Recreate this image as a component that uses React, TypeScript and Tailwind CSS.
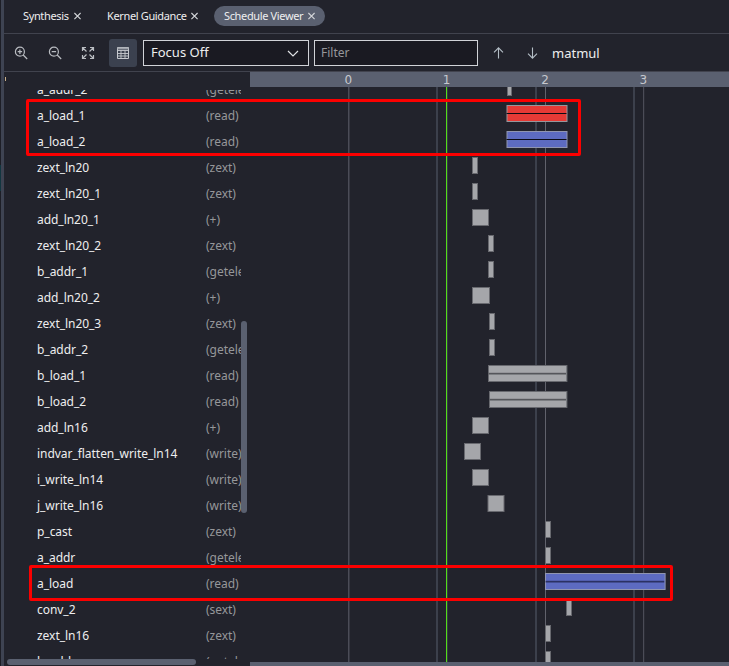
import React from "react";

type Tone = "gray" | "red" | "blue";
type Op = { name: string; kind: string; x: number; w: number; tone?: Tone; split?: "thin" | "thick" };

// x and w are measured from the left edge of the chart pane.
const ops: Op[] = [
  { name: "a_addr_2", kind: "(getele", x: 257, w: 5 },
  { name: "a_load_1", kind: "(read)", x: 256.5, w: 61, tone: "red", split: "thin" },
  { name: "a_load_2", kind: "(read)", x: 256.5, w: 61, tone: "blue", split: "thin" },
  { name: "zext_ln20", kind: "(zext)", x: 222, w: 6 },
  { name: "zext_ln20_1", kind: "(zext)", x: 222, w: 6 },
  { name: "add_ln20_1", kind: "(+)", x: 222, w: 17 },
  { name: "zext_ln20_2", kind: "(zext)", x: 238, w: 6 },
  { name: "b_addr_1", kind: "(getele", x: 238, w: 6 },
  { name: "add_ln20_2", kind: "(+)", x: 222, w: 18 },
  { name: "zext_ln20_3", kind: "(zext)", x: 239, w: 6 },
  { name: "b_addr_2", kind: "(getele", x: 239, w: 6 },
  { name: "b_load_1", kind: "(read)", x: 238, w: 79.4, split: "thick" },
  { name: "b_load_2", kind: "(read)", x: 239, w: 78.4, split: "thick" },
  { name: "add_ln16", kind: "(+)", x: 222, w: 17 },
  { name: "indvar_flatten_write_ln14", kind: "(write)", x: 214, w: 17 },
  { name: "i_write_ln14", kind: "(write)", x: 222, w: 17 },
  { name: "j_write_ln16", kind: "(write)", x: 237.5, w: 17 },
  { name: "p_cast", kind: "(zext)", x: 295, w: 6 },
  { name: "a_addr", kind: "(getele", x: 295, w: 6 },
  { name: "a_load", kind: "(read)", x: 295, w: 120.6, tone: "blue", split: "thick" },
  { name: "conv_2", kind: "(sext)", x: 316, w: 6 },
  { name: "zext_ln16", kind: "(zext)", x: 295, w: 6 },
  { name: "b_addr", kind: "(getele", x: 295, w: 6 },
];

const tones: Record<Tone, { fill: string; edge: string; thick: string }> = {
  gray: { fill: "#a5a6aa", edge: "#68696f", thick: "#55565b" },
  red: { fill: "#e63a36", edge: "#96979d", thick: "#55565b" },
  blue: { fill: "#5d6bc1", edge: "#9095b0", thick: "#2b3163" },
};

function Bar({ op }: { op: Op }) {
  const t = tones[op.tone ?? "gray"];
  return (
    <svg className="block" width="479" height="17">
      <rect x={op.x + 0.5} y="0.5" width={op.w - 1} height="16" fill={t.fill} stroke={t.edge} />
      {op.split === "thin" && <rect x={op.x} y="8" width={op.w - 1} height="1" fill="#0b0b14" />}
      {op.split === "thick" && <rect x={op.x + 0.6} y="7.8" width={op.w - 2} height="1.7" fill={t.thick} />}
    </svg>
  );
}

function Close() {
  return (
    <svg width="7" height="8" viewBox="0 0 7 8" stroke="#d4d6da" strokeWidth="1.1" fill="none">
      <path d="M.4 1l6.2 6.2M6.6 1L.4 7.2" />
    </svg>
  );
}

function Zoom({ plus }: { plus?: boolean }) {
  return (
    <svg width="14" height="14" viewBox="0 0 14 14" stroke="#b9bcc1" strokeWidth="1.2" fill="none">
      <circle cx="5.9" cy="5.7" r="4.5" />
      <path d="M9.2 9l4 4M3.7 5.7h4.4" />
      {plus && <path d="M5.9 3.5v4.4" />}
    </svg>
  );
}

function Expand() {
  return (
    <svg width="14" height="14" viewBox="0 0 14 14" stroke="#b9bcc1" strokeWidth="1.2" fill="none">
      <path d="M1.5 5V1.5H5M9 1.5h3.5V5M12.5 9v3.5H9M5 12.5H1.5V9M1.5 1.5l4 4M12.5 1.5l-4 4M12.5 12.5l-4-4M1.5 12.5l4-4" />
    </svg>
  );
}

function Table() {
  return (
    <svg width="12" height="12" viewBox="0 0 12 12" stroke="#c6c9ce" strokeWidth="1" fill="none">
      <path d="M.5.5h11v11H.5z" />
      <path d="M.5 1.5h11" strokeWidth="2" stroke="#9da1a9" />
      <path d="M.5 3.5h11M.5 6.5h11M.5 9h11M4 3.5v8M8 3.5v8" strokeWidth=".9" />
    </svg>
  );
}

function Arrow({ down }: { down?: boolean }) {
  return (
    <svg width="11" height="12" viewBox="0 0 11 12" stroke="#b4bec6" strokeWidth="1.1" fill="none">
      <path d={down ? "M5.5 .5v10.6M1 6.6l4.5 4.5L10 6.6" : "M5.5 11.5V.9M1 5.4L5.5 .9 10 5.4"} />
    </svg>
  );
}

export default function App() {
  return (
    <div className="relative flex h-[666px] w-[729px] overflow-hidden bg-[#22232c] font-['Noto_Sans',sans-serif] text-[#eeeeef]">
      <div className="flex w-1 shrink-0 flex-col border-r-[3px] border-[#3e4352] bg-[#1d1e26]">
        <div className="mt-[165px] h-[26px] bg-[#123640]" />
      </div>
      <div className="flex min-w-0 flex-1 flex-col">
        <div className="flex h-[34px] shrink-0 items-center border-b border-[#41434e] pb-px text-[11px] leading-5 tracking-[-0.36px]">
          <div className="ml-[19px] flex w-[84px] items-center gap-[6px] whitespace-nowrap">
            <span className="w-[45px]">Synthesis</span><Close />
          </div>
          <div className="flex w-[107px] items-center gap-[5px] whitespace-nowrap">
            <span className="w-[79px]">Kernel Guidance</span><Close />
          </div>
          <div className="flex h-5 w-[111px] items-center gap-[5px] whitespace-nowrap rounded-full bg-[#5a6070] pl-[10px]">
            <span className="w-[79px]">Schedule Viewer</span><Close />
          </div>
        </div>
        <div className="flex h-[38px] shrink-0 items-center border-b border-[#41434e]">
          <div className="flex w-[34px] justify-center"><Zoom plus /></div>
          <div className="flex w-[34px] justify-center"><Zoom /></div>
          <div className="flex w-8 justify-center"><Expand /></div>
          <div className="ml-[5px] flex size-7 items-center justify-center rounded-[3px] bg-[#3b414f]"><Table /></div>
          <div className="ml-[6px] flex h-[26px] w-[166px] items-center justify-between border border-[#d1d3d8] bg-[#1a1a22] pl-[7px] pr-[9px] text-[13px]">
            <span>Focus Off</span>
            <svg className="mt-px" width="12" height="7" viewBox="0 0 12 7" stroke="#e1e3e6" strokeWidth="1.2" fill="none"><path d="M1 1l5 5 5-5" /></svg>
          </div>
          <div className="ml-[5px] flex h-[26px] w-[164px] items-center border border-[#d1d3d8] bg-[#1a1a22] pl-[6px] text-[12px] text-[#96979a]">Filter</div>
          <div className="ml-[15px] flex w-[11px]"><Arrow /></div>
          <div className="ml-[23px] flex w-[11px]"><Arrow down /></div>
          <span className="ml-[14px] pt-[2px] text-[13px]">matmul</span>
        </div>
        <div className="flex min-h-0 flex-1">
          <div className="relative flex w-[246px] shrink-0 flex-col">
            <div className="h-[18px] shrink-0"><div className="h-1 w-px translate-x-px translate-y-[5px] bg-[#c9b08a]" /></div>
            <div className="h-[569px] w-[237px] shrink-0 overflow-hidden">
              <div className="-mt-[13px] text-[12px] tracking-[-0.04px]">
                {ops.map((op) => (
                  <div key={op.name} className="flex h-[26px] items-center whitespace-nowrap pl-[33px]">
                    <span className="w-[169px] shrink-0">{op.name}</span>
                    <span className="text-[#96979a]">{op.kind}</span>
                  </div>
                ))}
              </div>
            </div>
            <div className="ml-[3px] h-[6px] w-[189px] rounded-full bg-[#5a6070]" />
            <div className="absolute left-[237px] top-[249px] h-[192px] w-[6px] rounded-full bg-[#5a6070]" />
          </div>
          <div className="flex min-w-0 flex-1 flex-col">
            <div className="flex h-[15px] shrink-0 items-center bg-[#5a6070] pl-[49px] pt-px font-['DejaVu_Sans',sans-serif] text-[12px] leading-[15px] text-[#c6c8ce]">
              {["0", "1", "2", "3"].map((n) => (
                <span key={n} className="w-[98.4px] shrink-0 text-center">{n}</span>
              ))}
            </div>
            <div className="relative min-h-0 flex-1 overflow-hidden">
              <svg className="absolute inset-0" width="479" height="576">
                <g fill="#3c404c">
                  <rect x="186" width="2" height="576" />
                  <rect x="285" width="2" height="576" />
                  <rect x="383" width="2" height="576" />
                </g>
                <g fill="#4b4c57">
                  <rect x="98" width="1.5" height="576" />
                  <rect x="295" width="1" height="576" fill="#61626c" />
                  <rect x="393" width="1.2" height="576" />
                </g>
                <rect x="196" width="1" height="576" fill="#53dc19" />
                <rect x="197" width="1" height="576" fill="#363b43" />
              </svg>
              <div className="relative -mt-[10px]">
                {ops.map((op) => (
                  <div key={op.name} className="h-[26px] pt-[2px]"><Bar op={op} /></div>
                ))}
              </div>
            </div>
            <div className="h-1 shrink-0 bg-[#5a6070]" />
          </div>
        </div>
      </div>
      <div className="absolute left-[26px] top-[99px] h-[57px] w-[555px] rounded-[2px] border-[3px] border-[#fb0000]" />
      <div className="absolute left-[29px] top-[565px] h-[36px] w-[644px] rounded-[2px] border-[3px] border-[#fb0000]" />
    </div>
  );
}
